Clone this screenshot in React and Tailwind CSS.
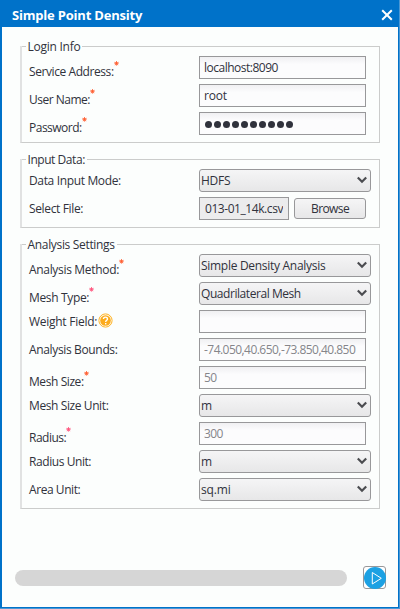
import React from "react";

const rowLabel = "text-[12px] leading-[16px] whitespace-nowrap text-[#30323c]";

function Star({ pink }) {
  return (
    <svg width="5" height="5" viewBox="0 0 5 5" className="-mt-[3px] shrink-0" stroke={pink ? "#ff4f78" : "#ff5a2c"}>
      <path d="M2.5 0v4.6M.4 1.3l4.2 1.4M4.6 1.3L.4 2.7M1.1 4.2L2.5 2l1.4 2.2" strokeWidth=".8" fill="none" />
    </svg>
  );
}

function Help() {
  return (
    <svg width="15" height="15" viewBox="0 0 15 15" className="-mt-px ml-px shrink-0">
      <circle cx="7.5" cy="7.5" r="6.6" fill="#fffaf0" stroke="#fdb52b" strokeWidth="1" />
      <circle cx="7.5" cy="7.5" r="5.3" fill="#fcab1c" />
      <path d="M5.5 6.1c0-2.6 4-2.5 4-.2 0 1.4-1.8 1.5-1.8 3" fill="none" stroke="#fff" strokeWidth="1.4" />
      <rect x="7" y="10" width="1.4" height="1.4" fill="#fff" />
    </svg>
  );
}

function Row({ label, track = "tracking-[-0.35px]", star, help, drop = "pt-[8px]", children }) {
  return (
    <div className="flex h-7 items-start">
      <div className={`flex w-[170px] shrink-0 items-start ${drop}`}>
        <span className={`${rowLabel} ${track}`}>{label}</span>
        {star && <Star pink={star === "pink"} />}
        {help && <Help />}
      </div>
      {children}
    </div>
  );
}

function Field({ value, muted, track = "tracking-[-0.3px]" }) {
  return (
    <div className="flex h-[23px] w-[167px] items-center border border-[#98989a] bg-gradient-to-b from-[#f0f0f2] to-[#fcfcfd] to-35% pl-1">
      <span className={`whitespace-nowrap text-[12px] leading-4 ${track} ${muted ? "text-[#85858a]" : "text-[#30323c]"}`}>{value}</span>
    </div>
  );
}

function Select({ value, track = "tracking-[-0.25px]" }) {
  return (
    <div className="flex h-[23px] w-[172px] items-center justify-between rounded-[3px] border border-[#98989a] bg-gradient-to-b from-[#f5f5f6] to-[#e7e7e8] pl-px pr-[3px]">
      <span className={`whitespace-nowrap text-[12px] leading-4 text-[#30323c] ${track}`}>{value}</span>
      <svg width="10" height="8" viewBox="0 0 10 8" className="mb-px">
        <path d="M.8 1.5L5 5.7l4.2-4.2" fill="none" stroke="#4b4c50" strokeWidth="2.2" />
      </svg>
    </div>
  );
}

function Group({ title, track, height, children }) {
  return (
    <section className={`flex flex-col border border-t-0 border-l-2 border-[#cbcccb] border-l-[#e1e2e2] ${height}`}>
      <div className="flex h-0 items-center">
        <span className="h-px w-1 shrink-0 bg-[#cbcccb]" />
        <h2 className={`whitespace-nowrap pl-[1.5px] pr-[2px] pt-[2px] text-[12px] leading-4 text-[#30323c] ${track}`}>{title}</h2>
        <span className="h-px grow bg-[#cbcccb]" />
      </div>
      <div className="flex flex-col pl-[7px] pt-[10px]">{children}</div>
    </section>
  );
}

export default function App() {
  return (
    <main className="flex h-[609px] w-[400px] flex-col border border-[#4b98d5] border-l-0 border-t-0 bg-[#0072c9] pb-px pl-[2px] pr-px font-['Open_Sans','Noto_Sans',sans-serif]">
      <header className="flex h-[27px] shrink-0 items-center justify-between pl-[10px] pr-[5px] pt-[2px]">
        <h1 className="whitespace-nowrap text-[13px] font-bold leading-4 tracking-[-0.2px] text-white">Simple Point Density</h1>
        <svg width="12" height="12" viewBox="0 0 12 12"><path d="M1.2 1.2l9.6 9.6M10.8 1.2l-9.6 9.6" stroke="#fff" strokeWidth="2" /></svg>
      </header>
      <div className="flex grow flex-col bg-[#fcfefd] pl-[18px] pr-[18px] pt-[19px]">
        <Group title="Login Info" track="tracking-[-0.25px]" height="h-[97px]">
          <Row label="Service Address:" track="tracking-[-0.42px]" star="red"><Field value="localhost:8090" track="tracking-[-0.5px]" /></Row>
          <Row label="User Name:" track="tracking-[-0.5px]" star="red"><Field value="root" track="tracking-[-0.2px]" /></Row>
          <Row label="Password:" track="tracking-[-0.5px]" star="red">
            <div className="flex h-[23px] w-[167px] items-center gap-[2px] border border-[#98989a] bg-gradient-to-b from-[#f0f0f2] to-[#fcfcfd] to-35% pl-[5px] pt-px">
              {Array.from({ length: 10 }, (_, i) => <span key={i} className="h-[7px] w-[7px] rounded-full bg-[#30323c]" />)}
            </div>
          </Row>
        </Group>
        <div className="h-4 shrink-0" />
        <Group title="Input Data:" track="tracking-[-0.45px]" height="h-[69px]">
          <Row label="Data Input Mode:" drop="pt-[4px]"><Select value="HDFS" /></Row>
          <Row label="Select File:" drop="pt-[4px]">
            <div className="flex h-[23px] w-[90px] items-center justify-end overflow-hidden border border-[#98989a] bg-[#ececed] px-[5px]">
              <div className="flex w-[79px] justify-end overflow-hidden"><span className="whitespace-nowrap text-[12px] leading-4 tracking-[-0.43px] text-[#30323c]">2013-01_14k.csv</span></div>
            </div>
            <button className="ml-[5px] mt-px h-[21px] w-[72px] rounded-[3px] border border-[#98989a] bg-gradient-to-b from-[#f5f5f6] to-[#e7e7e8] text-[12px] leading-4 tracking-[-0.6px] text-[#30323c]">Browse</button>
          </Row>
        </Group>
        <div className="h-4 shrink-0" />
        <Group title="Analysis Settings" track="tracking-[-0.33px]" height="h-[265px]">
          <Row label="Analysis Method:" track="tracking-[-0.32px]" star="red"><Select value="Simple Density Analysis" track="tracking-[-0.29px]" /></Row>
          <Row label="Mesh Type:" track="tracking-[-0.35px]" star="pink"><Select value="Quadrilateral Mesh" track="tracking-[-0.44px]" /></Row>
          <Row label="Weight Field:" track="tracking-[-0.27px]" help drop="pt-[4px]"><Field value="" /></Row>
          <Row label="Analysis Bounds:" track="tracking-[-0.35px]" drop="pt-[4px]"><Field value="-74.050,40.650,-73.850,40.850" muted track="tracking-[-0.54px]" /></Row>
          <Row label="Mesh Size:" track="tracking-[-0.42px]" star="red"><Field value="50" muted track="tracking-[-0.6px]" /></Row>
          <Row label="Mesh Size Unit:" track="tracking-[-0.4px]" drop="pt-[4px]"><Select value="m" /></Row>
          <Row label="Radius:" track="tracking-[-0.5px]" star="pink"><Field value="300" muted track="tracking-[-0.6px]" /></Row>
          <Row label="Radius Unit:" track="tracking-[-0.43px]" drop="pt-[4px]"><Select value="m" /></Row>
          <Row label="Area Unit:" track="tracking-[-0.43px]" drop="pt-[4px]"><Select value="sq.mi" track="tracking-[-0.15px]" /></Row>
        </Group>
        <footer className="-ml-[5px] -mr-[11px] mt-[57px] flex items-center gap-4">
          <div className="h-4 w-[332px] shrink-0 rounded-full bg-[#d6d6d6]" />
          <button className="flex h-[23px] w-[23px] shrink-0 items-center justify-center rounded-[3px] border border-[#98989a] bg-white">
            <svg width="22" height="22" viewBox="0 0 22 22" className="shrink-0"><circle cx="11" cy="11" r="11" fill="#1ca1e3" /><path d="M8.3 5.5v11.5l9-5.7z" fill="none" stroke="#fff" strokeWidth="1" /></svg>
          </button>
        </footer>
      </div>
    </main>
  );
}
